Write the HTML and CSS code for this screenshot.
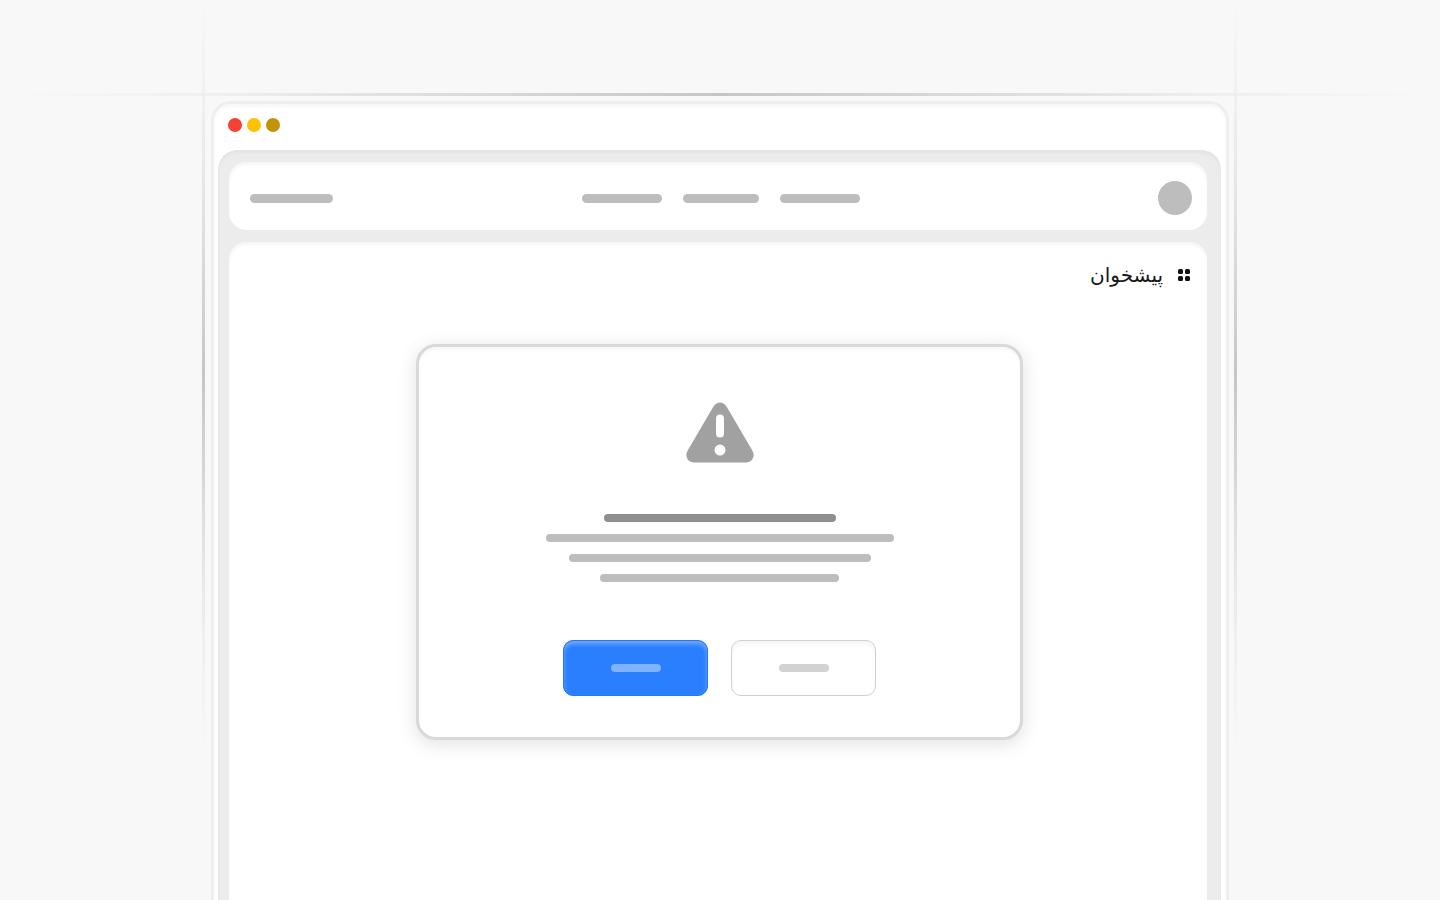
FILE: index.html
```html
<!DOCTYPE html>
<html lang="fa">
<head>
<meta charset="utf-8">
<meta name="viewport" content="width=device-width, initial-scale=1">
<title>پیشخوان</title>
<link rel="stylesheet" href="styles.css">
</head>
<body>
<div class="scene">
  <div class="stage">
    <div class="window">
      <div class="titlebar">
        <span class="dot dot-red"></span>
        <span class="dot dot-yellow"></span>
        <span class="dot dot-gold"></span>
      </div>
      <div class="frame">
        <header class="topbar">
          <span class="bar brand"></span>
          <nav class="links">
            <span class="bar link"></span>
            <span class="bar link link-short"></span>
            <span class="bar link"></span>
          </nav>
          <span class="avatar"></span>
        </header>
        <main class="panel">
          <div class="heading" dir="rtl">
            <svg class="grid-icon" viewBox="0 0 12 12" aria-hidden="true">
              <rect width="5" height="5" rx="1.500"/>
              <rect x="7" width="5" height="5" rx="1.500"/>
              <rect y="7" width="5" height="5" rx="1.500"/>
              <rect x="7" y="7" width="5" height="5" rx="1.500"/>
            </svg>
            <h1 class="title">پیشخوان</h1>
          </div>
          <section class="dialog">
            <svg class="warning" viewBox="0 0 68 61" aria-hidden="true">
              <path fill="#a1a1a1" d="M27 5.200 C30.500 -1.200 37.500 -1.200 41 5.200 L66.300 48.500 C69.500 54 66.500 60.500 60 60.500 H8 C1.500 60.500 -1.500 54 1.700 48.500 Z"/>
              <path d="M34 16.500 V31.500" stroke="#fff" stroke-width="8" stroke-linecap="round"/>
              <circle cx="34" cy="48" r="5.500" fill="#fff"/>
            </svg>
            <div class="copy">
              <span class="line line-title"></span>
              <span class="line line-long"></span>
              <span class="line line-medium"></span>
              <span class="line line-small"></span>
            </div>
            <div class="actions">
              <button class="button button-primary" type="button" aria-label="تأیید"><span class="label"></span></button>
              <button class="button" type="button" aria-label="انصراف"><span class="label"></span></button>
            </div>
          </section>
        </main>
      </div>
    </div>
  </div>
</div>
</body>
</html>
```
FILE: styles.css
```css
* {
  box-sizing: border-box;
}

body {
  margin: 0;
  background: #f8f8f8;
  font-family: "DejaVu Sans", sans-serif;
}

.scene {
  position: relative;
  display: flex;
  justify-content: center;
  min-height: 100vh;
}

/* Guide lines that fade out at both ends */
.scene::before {
  content: "";
  position: absolute;
  top: 93px;
  left: 0;
  right: 0;
  height: 3px;
  background: linear-gradient(90deg, transparent 1%, #efefef 15%, #e4e4e4 24%, #c6c6c6 50%, #e4e4e4 76%, #efefef 85%, transparent 99%);
}

.stage {
  position: relative;
  display: flex;
  width: 100%;
  max-width: 1034px;
  padding: 101px 8px 0;
}

.stage::before,
.stage::after {
  content: "";
  position: absolute;
  top: 0;
  width: 3px;
  height: 750px;
  background: linear-gradient(180deg, transparent, #efefef 15%, #e6e6e6 25%, #c6c6c6 50%, #e6e6e6 75%, #efefef 85%, transparent);
}

.stage::before {
  left: -1px;
}

.stage::after {
  right: 0;
}

.window {
  display: flex;
  flex-direction: column;
  flex: 1;
  padding: 0 5px 0 4px;
  border: 3px solid #eee;
  border-bottom: 0;
  border-radius: 20px 20px 0 0;
  background: #fff;
  box-shadow: inset 0 3px 3px #f8f8f8;
}

.titlebar {
  display: flex;
  gap: 5px;
  padding: 14px 10px 18px;
}

.dot {
  width: 14px;
  height: 14px;
  border-radius: 50%;
}

.dot-red {
  background: #f44336;
}

.dot-yellow {
  background: #fcc203;
}

.dot-gold {
  background: #bf9408;
}

.frame {
  display: flex;
  flex-direction: column;
  flex: 1;
  gap: 12px;
  padding: 12px 14px 0 11px;
  border-radius: 20px 20px 0 0;
  background: #ececec;
  box-shadow: inset 0 3px 3px #e4e4e4;
}

.topbar,
.panel {
  background: #fff;
  box-shadow: inset 0 3px 3px #f6f6f6;
}

.topbar {
  display: grid;
  grid-template-columns: 1fr auto 1fr;
  align-items: center;
  padding: 19px 15px 15px 21px;
  border-radius: 18px;
}

.bar {
  height: 9px;
  border-radius: 5px;
  background: #bdbdbd;
}

.brand {
  width: 83px;
}

.links {
  display: flex;
  gap: 21px;
}

.link {
  width: 80px;
}

.link-short {
  width: 76px;
}

.avatar {
  justify-self: end;
  width: 34px;
  height: 34px;
  border-radius: 50%;
  background: #bdbdbd;
}

.panel {
  flex: 1;
  padding: 18px 17px 40px 20px;
  border-radius: 18px 18px 0 0;
}

.heading {
  display: flex;
  align-items: center;
  gap: 15px;
  height: 30px;
}

.grid-icon {
  width: 12px;
  height: 12px;
  fill: #111;
}

.title {
  margin: 0;
  color: #171717;
  font-size: 20px;
  font-weight: 400;
  line-height: 28px;
}

.dialog {
  display: flex;
  flex-direction: column;
  align-items: center;
  max-width: 607px;
  margin: 54px auto 0;
  padding: 55px 20px 41px;
  border: 3px solid #d9d9d9;
  border-radius: 20px;
  background: #fff;
  box-shadow: 0 4px 20px rgba(0, 0, 0, 0.12), inset 0 3px 3px #f8f8f8;
}

.warning {
  width: 68px;
  height: 61px;
}

.copy {
  display: flex;
  flex-direction: column;
  align-items: center;
  gap: 12px;
  width: 100%;
  margin: 51px 0 58px;
}

.line {
  width: 100%;
  height: 8px;
  border-radius: 4px;
  background: #bdbdbd;
}

.line-title {
  max-width: 232px;
  background: #8f8f8f;
}

.line-long {
  max-width: 348px;
}

.line-medium {
  max-width: 302px;
}

.line-small {
  max-width: 239px;
}

.actions {
  display: flex;
  gap: 23px;
}

.button {
  display: flex;
  align-items: center;
  justify-content: center;
  width: 145px;
  height: 56px;
  padding: 0;
  border: 1px solid #d0d0d0;
  border-radius: 10px;
  background: #fff;
  box-shadow: inset 0 4px 4px #f6f6f6;
}

.label {
  width: 50px;
  height: 8px;
  border-radius: 4px;
  background: #d2d2d2;
}

.button-primary {
  border-color: #2676ec;
  background: #2a7fff;
  box-shadow: inset 0 3px 4px #72aaff;
}

.button-primary .label {
  background: #7fb2ff;
}
```
